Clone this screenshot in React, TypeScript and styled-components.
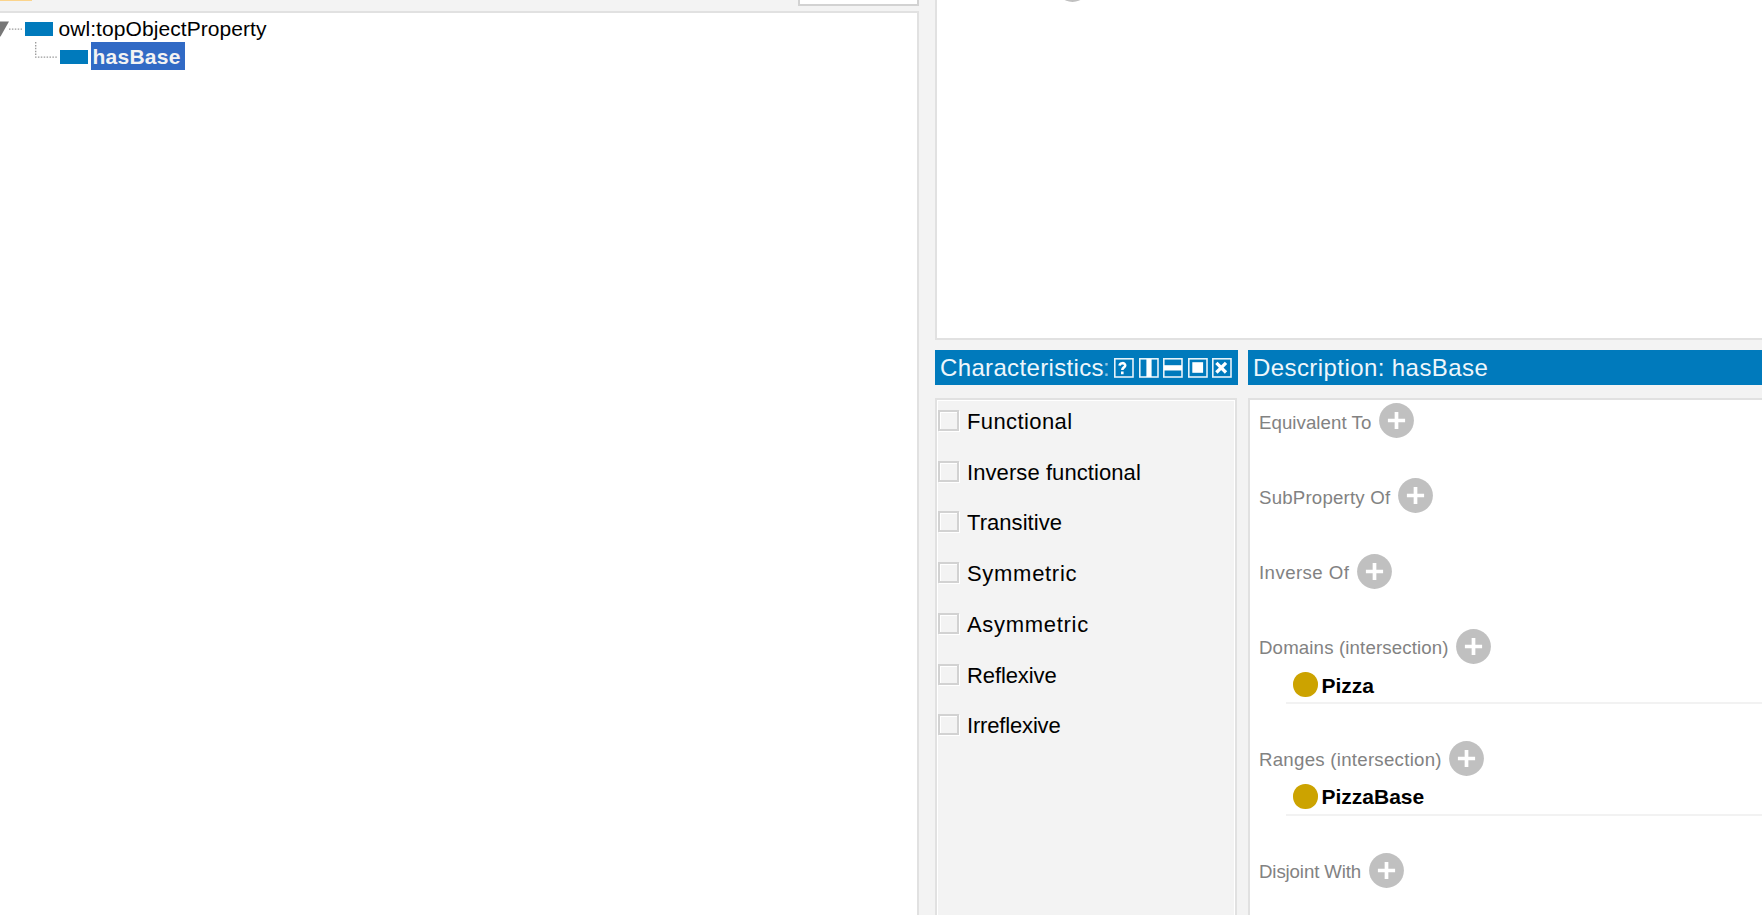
import React from "react";
import styled, { createGlobalStyle } from "styled-components";

const Global = createGlobalStyle`
  * { box-sizing: border-box; }
  body { margin: 0; background: #f3f3f3; overflow: hidden; font-family: "Liberation Sans", Arial, sans-serif; color: #000; }
  svg { display: block; flex: none; }
`;

const Window = styled.div`
  display: flex;
  width: 1762px;
  height: 915px;
  overflow: hidden;
  background: #f3f3f3;
`;

const Column = styled.div<{ $width: number }>`
  display: flex;
  flex-direction: column;
  flex: none;
  width: ${(p) => p.$width}px;
`;

const Toolbar = styled.div`
  display: flex;
  justify-content: space-between;
  height: 11px;
`;

const ActiveTool = styled.div`
  width: 32px;
  height: 1px;
  background: #fbd48c;
`;

const ModeSelect = styled.div`
  width: 121px;
  height: 6px;
  border: 2px solid #d2d2d2;
  border-top: 0;
  background: #fff;
`;

const TreePanel = styled.div`
  flex: 1;
  border: 2px solid #e1e1e1;
  border-left: 0;
  border-bottom: 0;
  background: #fff;
  padding-top: 1px;
`;

const TreeRow = styled.div`
  display: flex;
  align-items: center;
  height: 28px;
`;

const PropertyMark = styled.div`
  width: 28px;
  height: 14px;
  margin-top: 1px;
  background: #007abc;
`;

const NodeLabel = styled.div<{ $selected?: boolean }>`
  display: flex;
  align-items: center;
  height: 28px;
  white-space: nowrap;
  font-size: 21px;
  line-height: 28px;
  margin-left: ${(p) => (p.$selected ? 3 : 4)}px;
  padding: ${(p) => (p.$selected ? "2px 4.5px 0 2px" : "2px 0 0 2px")};
  color: ${(p) => (p.$selected ? "#f3f3f3" : "#000")};
  background: ${(p) => (p.$selected ? "#316ac5" : "transparent")};
  font-weight: ${(p) => (p.$selected ? 700 : 400)};
  letter-spacing: ${(p) => (p.$selected ? 0.25 : 0.07)}px;
`;

const RightColumn = styled.div`
  display: flex;
  flex-direction: column;
  flex: 1;
  min-width: 0;
  margin-left: 16px;
`;

const AnnotationPanel = styled.div`
  height: 340px;
  flex: none;
  border-left: 2px solid #e1e1e1;
  border-bottom: 2px solid #e1e1e1;
  background: #fff;
  overflow: hidden;
  padding-left: 118px;
`;

const ClippedAdd = styled.div`
  margin-top: -33px;
`;

const Lower = styled.div`
  display: flex;
  flex: 1;
  gap: 10px;
  padding-top: 10px;
`;

const View = styled.section<{ $width?: number }>`
  display: flex;
  flex-direction: column;
  gap: 13px;
  min-width: 0;
  flex: ${(p) => (p.$width ? `0 0 ${p.$width}px` : "1")};
`;

const TitleBar = styled.header`
  display: flex;
  align-items: center;
  height: 35px;
  padding: 0 7px 0 5px;
  background: #007abc;
  color: #eef6fb;
  font-size: 24px;
`;

const Title = styled.div<{ $width: number; $spacing: number }>`
  width: ${(p) => p.$width}px;
  white-space: nowrap;
  line-height: 35px;
  letter-spacing: ${(p) => p.$spacing}px;
`;

const TitleColon = styled.span`
  color: #8cc3e2;
  margin-left: -1px;
`;

const Controls = styled.div`
  display: flex;
  gap: 4.5px;
  margin-left: 5px;
  padding-top: 1px;
`;

const CheckPanel = styled.div`
  flex: 1;
  margin-right: 1px;
  border: 2px solid #e1e1e1;
  border-bottom: 0;
  box-shadow: inset 1px 1px 0 #fff, inset -1px 0 0 #fff;
  padding: 10px 0 0 1px;
`;

const CheckRow = styled.label`
  display: flex;
  align-items: center;
  height: 50.75px;
  font-size: 22px;
`;

const CheckList = styled.div`
  margin-top: -15px;
`;

const CheckBox = styled.span`
  width: 21px;
  height: 21px;
  margin-right: 8px;
  border: 2px solid #d2d2d2;
  box-shadow: 1px 1px 0 #fff, inset 1px 1px 0 #fff;
`;

const CheckText = styled.span<{ $spacing: number }>`
  padding-top: 3px;
  letter-spacing: ${(p) => p.$spacing}px;
`;

const DescriptionPanel = styled.div`
  flex: 1;
  padding: 3px 0 0 9px;
  border-left: 2px solid #e1e1e1;
  border-top: 2px solid #e1e1e1;
  background: #fff;
`;

const Section = styled.div<{ $filled: boolean }>`
  padding-bottom: ${(p) => (p.$filled ? 36.5 : 40.3)}px;
`;

const SectionHead = styled.div`
  display: flex;
  align-items: center;
  height: 35px;
`;

const SectionLabel = styled.div<{ $width: number; $spacing: number }>`
  flex: none;
  width: ${(p) => p.$width}px;
  padding-top: 4px;
  white-space: nowrap;
  font-size: 18.67px;
  color: #828282;
  letter-spacing: ${(p) => p.$spacing}px;
`;

const Entry = styled.p`
  display: flex;
  align-items: center;
  gap: 4px;
  height: 40.4px;
  margin: 0 0 0 27px;
  padding: 3px 0 0 7px;
  border-bottom: 2px solid #f2f2f2;
  font-size: 21px;
  font-weight: 700;
`;

const ClassDot = styled.span`
  width: 24.5px;
  height: 24.5px;
  border-radius: 50%;
  background: #cca300;
`;

const EntryText = styled.span`
  padding-top: 2px;
`;

const AddIcon = () => (
  <svg width="35" height="35" viewBox="0 0 35 35">
    <circle cx="17.5" cy="17.5" r="17.4" fill="#c0c0c0" />
    <path d="M17.5 8.9v17.2M8.9 17.5h17.2" stroke="#fff" strokeWidth="3.7" />
  </svg>
);

const controlMarks: React.ReactNode[] = [
  <path d="M5.6 7.6C5.9 4.4 11.2 4.4 11.2 7.4C11.2 9.5 8.3 9.3 8.3 12M8.3 13.4V16.2" fill="none" stroke="#fff" strokeWidth="2.6" />,
  <path d="M7.4 1h5.2v18H7.4z" fill="#fff" />,
  <path d="M1 7.2h18v5.3H1z" fill="#fff" />,
  <path d="M4.3 4.2h10.8v10.6H4.3z" fill="#fff" />,
  <path d="M4.4 4.9L14 14.5M14 4.9L4.4 14.5" stroke="#fff" strokeWidth="3.3" />,
];

const characteristics = [
  { name: "Functional", spacing: 0.4 },
  { name: "Inverse functional", spacing: 0.08 },
  { name: "Transitive", spacing: 0.05 },
  { name: "Symmetric", spacing: 0.7 },
  { name: "Asymmetric", spacing: 0.7 },
  { name: "Reflexive", spacing: -0.1 },
  { name: "Irreflexive", spacing: -0.17 },
];

const sections = [
  { label: "Equivalent To", width: 120.3, spacing: 0.05 },
  { label: "SubProperty Of", width: 139.2, spacing: 0.2 },
  { label: "Inverse Of", width: 97.5, spacing: 0.42 },
  { label: "Domains (intersection)", width: 197, spacing: 0.14, entry: "Pizza" },
  { label: "Ranges (intersection)", width: 190, spacing: 0.26, entry: "PizzaBase" },
  { label: "Disjoint With", width: 109.7, spacing: -0.12 },
];

export default function App() {
  return (
    <>
      <Global />
      <Window>
        <Column $width={919}>
          <Toolbar>
            <ActiveTool />
            <ModeSelect />
          </Toolbar>
          <TreePanel>
            <TreeRow>
              <svg width="24.5" height="28" viewBox="0 0 24.5 28">
                <path d="M-9 7.5H9L0.5 22.5H0z" fill="#777" />
                <path d="M9 15.2H22" stroke="#999" strokeWidth="1.3" strokeDasharray="1.5 1.4" />
              </svg>
              <PropertyMark />
              <NodeLabel>owl:topObjectProperty</NodeLabel>
            </TreeRow>
            <TreeRow>
              <svg width="59.5" height="28" viewBox="0 0 59.5 28">
                <path d="M35.7 0V15.2H57" fill="none" stroke="#999" strokeWidth="1.3" strokeDasharray="1.5 1.4" />
              </svg>
              <PropertyMark />
              <NodeLabel $selected>hasBase</NodeLabel>
            </TreeRow>
          </TreePanel>
        </Column>
        <RightColumn>
          <AnnotationPanel>
            <ClippedAdd><AddIcon /></ClippedAdd>
          </AnnotationPanel>
          <Lower>
            <View $width={303}>
              <TitleBar>
                <Title $width={169} $spacing={0.35}>Characteristics<TitleColon>:</TitleColon></Title>
                <Controls>
                  {controlMarks.map((mark, i) => (
                    <svg key={i} width="20" height="20" viewBox="0 0 20 20">
                      <rect x="0.8" y="0.8" width="18.2" height="18.2" fill="none" stroke="#e6f2f9" strokeWidth="1.6" />
                      {mark}
                    </svg>
                  ))}
                </Controls>
              </TitleBar>
              <CheckPanel>
                <CheckList>
                  {characteristics.map((c) => (
                    <CheckRow key={c.name}>
                      <CheckBox />
                      <CheckText $spacing={c.spacing}>{c.name}</CheckText>
                    </CheckRow>
                  ))}
                </CheckList>
              </CheckPanel>
            </View>
            <View>
              <TitleBar>
                <Title $width={400} $spacing={0.42}>Description: hasBase</Title>
              </TitleBar>
              <DescriptionPanel>
                {sections.map((s) => (
                  <Section key={s.label} $filled={!!s.entry}>
                    <SectionHead>
                      <SectionLabel $width={s.width} $spacing={s.spacing}>{s.label}</SectionLabel>
                      <AddIcon />
                    </SectionHead>
                    {s.entry && (
                      <Entry>
                        <ClassDot />
                        <EntryText>{s.entry}</EntryText>
                      </Entry>
                    )}
                  </Section>
                ))}
              </DescriptionPanel>
            </View>
          </Lower>
        </RightColumn>
      </Window>
    </>
  );
}
